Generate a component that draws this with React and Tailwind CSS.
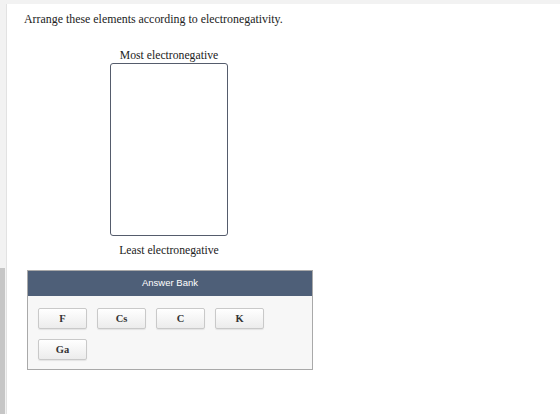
import React from 'react';

const bank = ['F', 'Cs', 'C', 'K', 'Ga'];

function Tile({ label }) {
  return (
    <div className="flex h-[21px] w-[49px] items-center justify-center rounded-[2px] border border-[#c9c9c9] bg-gradient-to-b from-white to-[#ececec] text-[10.5px] font-bold text-[#333] shadow-[0_1px_1px_rgba(0,0,0,0.08)]">
      {label}
    </div>
  );
}

export default function App() {
  return (
    <div className="flex h-[414px] w-[560px] flex-col bg-[#f2f2f2] font-['Liberation_Serif',serif]">
      {/* top band */}
      <div className="h-[4px]" />
      <div className="flex flex-1">
        {/* left gutter */}
        <div className="flex w-[7px] flex-col border-r border-[#e2e2e2]">
          <div className="h-[264px]" />
          <div className="w-[5px] flex-1 bg-[#c6c6c6]" />
        </div>

        <div className="flex-1 bg-white pl-[17px] pt-[9px]">
          <p className="text-[11.9px] leading-[13px] text-[#222]">
            Arrange these elements according to electronegativity.
          </p>

          {/* ranking target */}
          <div className="ml-[86px] mt-[23px] flex w-[118px] flex-col items-center">
            <div className="whitespace-nowrap text-[11.7px] leading-[13px] text-[#222]">Most electronegative</div>
            <div className="mt-[1px] h-[173px] w-[118px] rounded-[3px] border-[1.5px] border-[#555c6c] bg-white" />
            <div className="mt-[8px] whitespace-nowrap text-[11.7px] leading-[13px] text-[#222]">Least electronegative</div>
          </div>

          {/* answer bank */}
          <div className="ml-[3px] mt-[13px] w-[286px] border border-[#a9a9a9] bg-[#f7f7f7]">
            <div className="flex h-[25px] items-center justify-center bg-[#4e5f78] font-['Liberation_Sans',sans-serif] text-[9.5px] text-white">
              Answer Bank
            </div>
            <div className="flex flex-wrap gap-x-[10px] gap-y-[10px] px-[10px] pb-[9px] pt-[12px]">
              {bank.map((el) => (
                <Tile key={el} label={el} />
              ))}
            </div>
          </div>
        </div>
      </div>
    </div>
  );
}
